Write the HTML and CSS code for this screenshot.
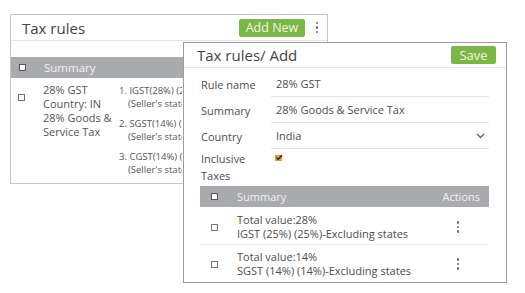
FILE: index.html
```html
<!DOCTYPE html>
<html>
<head>
<meta charset="utf-8">
<link rel="stylesheet" href="styles.css">
</head>
<body>
<div class="page">
  <section class="list-panel">
    <header class="list-head">
      <h1 class="list-title">Tax rules</h1>
      <div class="head-actions">
        <button class="btn btn-add">Add New</button>
        <span class="kebab"><i></i><i></i><i></i></span>
      </div>
    </header>
    <div class="list-spacer"></div>
    <div class="list-th">
      <span class="cb cb-head"></span>
      <span class="th-label">Summary</span>
    </div>
    <div class="list-row">
      <span class="cb list-cb"></span>
      <div class="summary-col">28% GST<br>Country: IN<br>28% Goods &amp;<br>Service Tax</div>
      <div class="tax-col">
        <ol class="tax-list">
          <li><span class="num">1.</span> IGST(28%) (28%)-Excluding states<br><span class="sub">(Seller's state)</span></li>
          <li><span class="num">2.</span> SGST(14%) (14%)-Excluding states<br><span class="sub">(Seller's state)</span></li>
          <li><span class="num">3.</span> CGST(14%) (14%)-Excluding states<br><span class="sub">(Seller's state)</span></li>
        </ol>
      </div>
    </div>
  </section>

  <section class="dialog">
    <header class="dialog-head">
      <h2 class="dialog-title">Tax rules/ Add</h2>
      <button class="btn btn-save">Save</button>
    </header>
    <div class="form">
      <div class="field">
        <label class="field-label">Rule name</label>
        <div class="field-value">28% GST</div>
      </div>
      <div class="field">
        <label class="field-label">Summary</label>
        <div class="field-value">28% Goods &amp; Service Tax</div>
      </div>
      <div class="field">
        <label class="field-label">Country</label>
        <div class="field-value select">India
          <svg class="chev" width="9" height="6" viewBox="0 0 9 6"><path d="M1 1l3.5 3.5L8 1" fill="none" stroke="#666" stroke-width="1.4"/></svg>
        </div>
      </div>
      <div class="field field-check">
        <label class="field-label">Inclusive<br>Taxes</label>
        <div class="check-wrap">
          <svg width="8" height="7" viewBox="0 0 8 7"><rect x="0" y="1" width="7" height="6" fill="#f39a2b"/><path d="M1.3 3.6l1.8 1.7L7 1.2" fill="none" stroke="#222" stroke-width="1.3"/></svg>
        </div>
      </div>
    </div>
    <div class="tax-table">
      <div class="tt-head">
        <span class="cb cb-head"></span>
        <span class="tt-summary">Summary</span>
        <span class="tt-actions">Actions</span>
      </div>
      <div class="tt-row">
        <span class="cb"></span>
        <div class="tt-text">Total value:28%<br>IGST (25%) (25%)-Excluding states</div>
        <span class="kebab tt-kebab"><i></i><i></i><i></i></span>
      </div>
      <div class="tt-row">
        <span class="cb"></span>
        <div class="tt-text">Total value:14%<br>SGST (14%) (14%)-Excluding states</div>
        <span class="kebab tt-kebab"><i></i><i></i><i></i></span>
      </div>
    </div>
  </section>
</div>
</body>
</html>
```

FILE: styles.css
```css
* { box-sizing: border-box; }
html, body { margin: 0; padding: 0; background: #fff; }
body {
  font-family: "Open Sans", "Liberation Sans", sans-serif;
  color: #4a4a4a;
  width: 525px;
  height: 293px;
  overflow: hidden;
}
.page { position: relative; width: 525px; height: 293px; padding: 14px 0 0 10px; }

/* back list panel */
.list-panel {
  width: 318px;
  height: 170px;
  border: 1px solid #c6c6c6;
  overflow: hidden;
  background: #fff;
}
.list-head {
  height: 26px;
  border-bottom: 1px solid #e4e4e4;
  display: flex;
  align-items: center;
  justify-content: space-between;
  padding: 0 8px 0 11px;
}
.list-title { margin: 0; font-size: 15px; font-weight: 400; color: #444; }
.head-actions { display: flex; align-items: center; gap: 10px; }
.btn {
  border: 0;
  background: #7cb644;
  color: #eef7e6;
  font-family: inherit;
  border-radius: 2px;
  padding: 0;
  height: 18px;
  line-height: 18px;
}
.btn-add { width: 66px; font-size: 12.5px; }
.btn-save { width: 45px; font-size: 13px; }

.kebab { display: flex; flex-direction: column; gap: 2px; width: 4px; align-items: center; }
.kebab i { display: block; width: 2.5px; height: 2.5px; border-radius: 50%; background: #6a6a6a; }

.list-spacer { height: 16px; }
.list-th {
  height: 21px;
  background: #a9abae;
  display: flex;
  align-items: center;
  padding-left: 8px;
  color: #f2f2f2;
  font-size: 11.5px;
}
.cb {
  display: inline-block;
  width: 7px;
  height: 7px;
  border: 1px solid #6f6f6f;
  background: #fff;
  flex: none;
}
.cb-head { border-color: #555; }
.th-label { margin-left: 18px; }

.list-row { display: flex; align-items: flex-start; padding: 5px 0 0 7px; }
.list-cb { margin-top: 11px; }
.summary-col { width: 76px; margin-left: 18px; font-size: 11px; line-height: 14px; color: #555; }
.tax-col { width: 63px; overflow: hidden; }
.tax-list {
  margin: 1px 0 0;
  padding: 0;
  list-style: none;
  font-size: 9.5px;
  line-height: 13px;
  color: #555;
  white-space: nowrap;
}
.tax-list li { margin-bottom: 7px; }
.tax-list .sub { padding-left: 9px; }

/* dialog */
.dialog {
  position: absolute;
  left: 183px;
  top: 42px;
  width: 324px;
  height: 241px;
  border: 1px solid #9c9c9c;
  background: #fff;
  overflow: hidden;
}
.dialog-head {
  height: 25px;
  border-bottom: 1px solid #e6e6e6;
  display: flex;
  align-items: center;
  justify-content: space-between;
  padding: 0 10px 0 13px;
}
.dialog-title { margin: 0; font-size: 15px; font-weight: 400; color: #444; }
.form { padding: 3px 17px 0 17px; }
.field { display: flex; align-items: stretch; height: 26px; }
.field-label { width: 70px; font-size: 11px; display: flex; align-items: center; color: #4d4d4d; }
.field-value {
  flex: 1;
  border-bottom: 1px solid #e4e4e4;
  font-size: 11px;
  display: flex;
  align-items: center;
  padding-left: 5px;
  color: #4d4d4d;
}
.select { justify-content: space-between; padding-right: 4px; }
.field-check { height: auto; align-items: flex-start; padding-top: 1px; }
.field-check .field-label { line-height: 17px; display: block; }
.check-wrap { padding: 4px 0 0 4px; line-height: 0; }

.tax-table { margin: 2px 17px 0 16px; }
.tt-head {
  height: 21px;
  background: #a9abae;
  display: flex;
  align-items: center;
  padding: 0 9px 0 11px;
  color: #f2f2f2;
  font-size: 11px;
}
.tt-summary { margin-left: 19px; flex: 1; }
.tt-row {
  display: flex;
  align-items: center;
  padding: 6px 0 3px 11px;
  border-bottom: 1px solid #ebebeb;
  font-size: 11px;
  line-height: 14px;
  color: #4d4d4d;
}
.tt-row + .tt-row { padding-top: 5px; border-bottom: 0; }
.tt-row .cb { border-color: #777; }
.tt-text { margin-left: 19px; flex: 1; white-space: nowrap; }
.tt-kebab { margin-right: 29px; }
```
